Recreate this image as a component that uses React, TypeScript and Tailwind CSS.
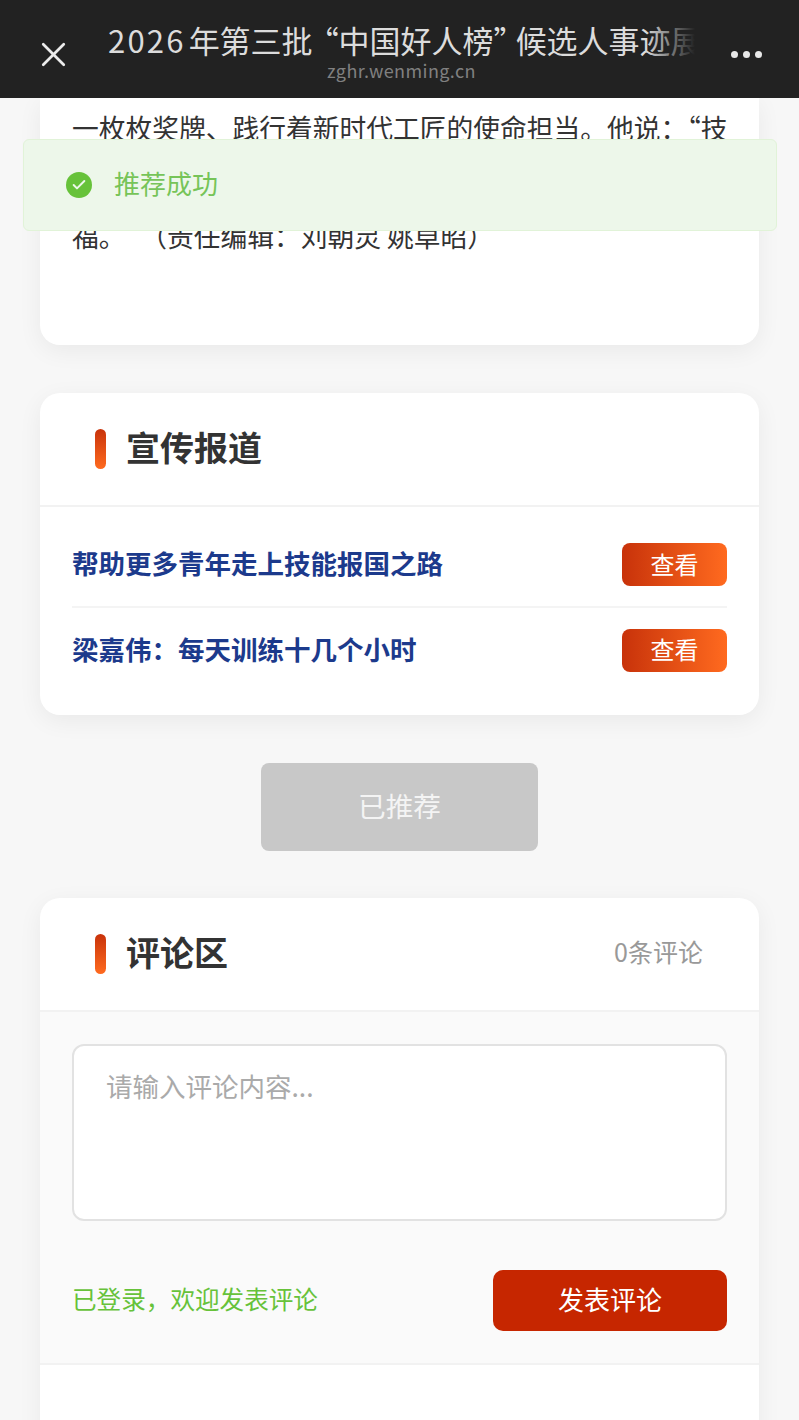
import { X, Check } from 'lucide-react'

const cjk = "font-['Noto_Sans_CJK_SC','Liberation_Sans',sans-serif]"

const reports = ['帮助更多青年走上技能报国之路', '梁嘉伟：每天训练十几个小时']

function SectionTitle({ title, extra }: { title: string; extra?: string }) {
  return (
    <div className="flex h-[112px] items-center pl-[55px] pr-[56px]">
      <span className="h-[40px] w-[11px] rounded-full bg-gradient-to-b from-[#c8320a] to-[#ff6a1f]" />
      <h2 className="ml-[20px] pb-[4px] text-[34px] font-bold leading-none text-[#333]">{title}</h2>
      {extra && <span className="ml-auto pb-[5px] text-[25px] leading-none text-[#999]">{extra}</span>}
    </div>
  )
}

export default function App() {
  return (
    <div className={`relative h-[1420px] w-[799px] overflow-hidden bg-[#f7f7f7] ${cjk}`}>
      {/* TOP BAR */}
      <header className="relative flex h-[98px] items-center bg-[#222222] pl-[33px] pr-[37px]">
        <X size={41} strokeWidth={1.6} className="shrink-0 translate-y-[5px] text-[#ececec]" />
        <div className="ml-[34px] w-[587px] min-w-0 pt-[2px]">
          <div className="relative overflow-hidden whitespace-nowrap text-[31px] leading-[40px] text-[#dcdcdc]">
            <span className="tracking-[2.2px]">2026</span>
            <span className="ml-[3px]">年第三批</span>
            <span className="ml-[-5px]">“中国好人榜”</span>
            <span className="ml-[-9px]">候选人事迹展示</span>
            <div className="absolute inset-y-0 right-0 w-[50px] bg-gradient-to-r from-transparent to-[#222222]" />
          </div>
          <p className="text-center text-[18px] leading-[20px] tracking-[0.4px] text-[#808080]">zghr.wenming.cn</p>
        </div>
        <div className="ml-auto flex translate-y-[5px] gap-[5px]">
          <span className="h-[7px] w-[7px] rounded-full bg-[#e8e8e8]" />
          <span className="h-[7px] w-[7px] rounded-full bg-[#e8e8e8]" />
          <span className="h-[7px] w-[7px] rounded-full bg-[#e8e8e8]" />
        </div>
      </header>

      <main className="flex flex-col px-[40px]">
        {/* ARTICLE TAIL */}
        <section className="h-[247px] rounded-b-[20px] bg-white px-[32px] shadow-[0_6px_24px_rgba(0,0,0,0.06)]">
          <p className="whitespace-nowrap pt-[2px] text-[26.75px] leading-[55px] text-[#333]">一枚枚奖牌、践行着新时代工匠的使命担当。他说：“技</p>
          <p className="h-[53px]" />
          <p className="whitespace-nowrap text-[26.75px] leading-[55px] text-[#333]">
            福。
            <span className="ml-[28px]">（责任编辑：刘朝灵 姚卓昭）</span>
          </p>
        </section>

        {/* REPORTS */}
        <section className="mt-[48px] rounded-[20px] bg-white shadow-[0_6px_24px_rgba(0,0,0,0.06)]">
          <div className="border-b-2 border-[#f2f2f2]">
            <SectionTitle title="宣传报道" />
          </div>
          <ul className="px-[32px] pb-[23px] pt-[16px]">
            {reports.map((r, i) => (
              <li key={r} className={`flex items-center justify-between ${i === 0 ? 'h-[85px] border-b-2 border-[#f4f4f4]' : 'h-[84px]'}`}>
                <span className="pb-[2px] text-[26.5px] font-bold leading-none text-[#1c3a8c]">{r}</span>
                <button className="h-[43px] w-[105px] rounded-[8px] bg-gradient-to-r from-[#c8320a] to-[#ff6a1f] pb-[2px] text-[24px] text-[#fff]">查看</button>
              </li>
            ))}
          </ul>
        </section>

        {/* RECOMMEND */}
        <button className="mx-auto mt-[48px] h-[88px] w-[277px] rounded-[8px] bg-[#c8c8c8] pb-[2px] text-[27.7px] text-[#f4f4f4]">已推荐</button>

        {/* COMMENTS */}
        <section className="mt-[47px] h-[600px] rounded-[20px] bg-white shadow-[0_6px_24px_rgba(0,0,0,0.06)]">
          <SectionTitle title="评论区" extra="0条评论" />
          <div className="border-y-2 border-[#f2f2f2] bg-[#fafafa] px-[32px] pb-[32px] pt-[32px]">
            <textarea
              readOnly
              placeholder="请输入评论内容..."
              className="block h-[177px] w-full resize-none rounded-[12px] border-2 border-[#e2e2e2] bg-white px-[32px] py-[21px] text-[26.5px] leading-[38px] outline-none placeholder:text-[#aaaaaa]"
            />
            <div className="mt-[49px] flex items-center justify-between">
              <span className="pb-[4px] text-[24.6px] leading-none text-[#67c23a]">已登录，欢迎发表评论</span>
              <button className="h-[61px] w-[234px] rounded-[10px] bg-[#c62600] pb-[4px] text-[26px] text-white">发表评论</button>
            </div>
          </div>
        </section>
      </main>

      {/* TOAST */}
      <div className="absolute left-[23px] top-[139px] flex h-[92px] w-[754px] items-center rounded-[6px] border border-[#e1f3d8] bg-[#edf7ea] pl-[42px]">
        <span className="grid h-[26px] w-[26px] place-items-center rounded-full bg-[#67c23a]">
          <Check size={16} strokeWidth={3} className="text-[#edf7ea]" />
        </span>
        <span className="ml-[22px] pb-[4px] text-[26px] leading-none text-[#76c458]">推荐成功</span>
      </div>
    </div>
  )
}
